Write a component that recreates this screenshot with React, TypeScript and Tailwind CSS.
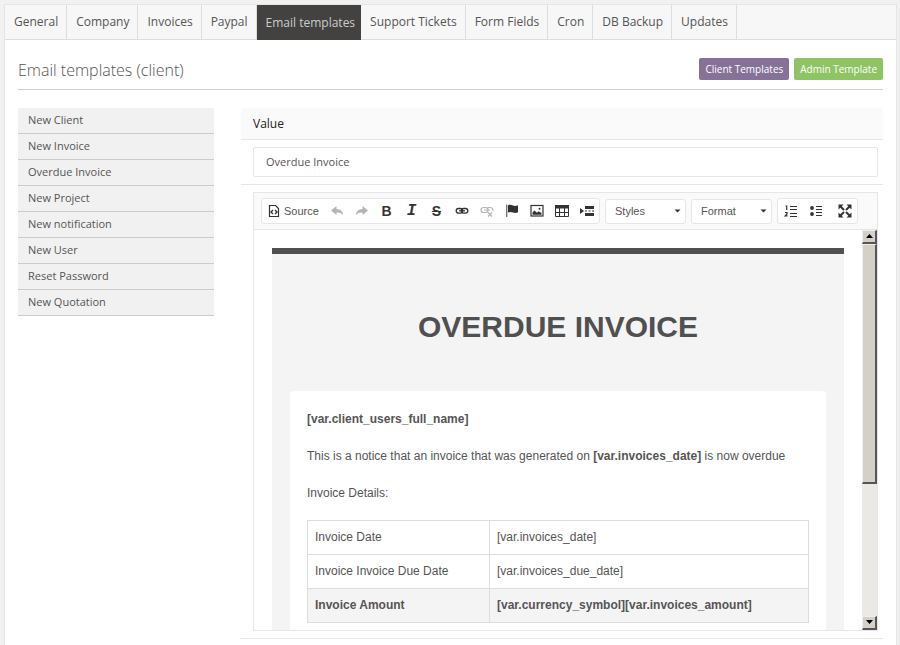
import React from 'react';

const tabs = [
  'General',
  'Company',
  'Invoices',
  'Paypal',
  'Email templates',
  'Support Tickets',
  'Form Fields',
  'Cron',
  'DB Backup',
  'Updates',
];

const templates = [
  'New Client',
  'New Invoice',
  'Overdue Invoice',
  'New Project',
  'New notification',
  'New User',
  'Reset Password',
  'New Quotation',
];

const rows = [
  { label: 'Invoice Date', value: '[var.invoices_date]', total: false },
  { label: 'Invoice Invoice Due Date', value: '[var.invoices_due_date]', total: false },
  { label: 'Invoice Amount', value: '[var.currency_symbol][var.invoices_amount]', total: true },
];

function Icon({ children, faded = false }: { children: React.ReactNode; faded?: boolean }) {
  return (
    <svg
      width="16"
      height="16"
      viewBox="0 0 16 16"
      fill="none"
      stroke="currentColor"
      aria-hidden="true"
      className={faded ? 'shrink-0 text-[#b5b5b5]' : 'shrink-0 text-[#333]'}
    >
      {children}
    </svg>
  );
}

function Tool({ label, children }: { label: string; children: React.ReactNode }) {
  return (
    <button
      type="button"
      aria-label={label}
      title={label}
      className="flex h-[23px] w-[25px] shrink-0 items-center justify-center text-[#333]"
    >
      {children}
    </button>
  );
}

function ToolSelect({ label, options }: { label: string; options: string[] }) {
  return (
    <div className="relative w-[81px] shrink-0">
      <select
        aria-label={label}
        defaultValue={label}
        className="h-[25px] w-full appearance-none rounded-[3px] border border-[#e6e6e6] bg-white pl-[9px] text-[11px] text-[#555]"
      >
        <option>{label}</option>
        {options.map((o) => (
          <option key={o}>{o}</option>
        ))}
      </select>
      <svg
        width="7"
        height="4"
        viewBox="0 0 7 4"
        aria-hidden="true"
        className="pointer-events-none absolute top-[11px] right-[5px]"
      >
        <path d="M0.5 0.5h6L3.5 3.5z" fill="#333" />
      </svg>
    </div>
  );
}

function Toolbar() {
  return (
    <div className="flex gap-[5px] border-b border-[#e6e6e6] bg-[#fafafa] px-[7px] py-[5px] font-['Liberation_Sans',sans-serif]">
      <div className="flex shrink-0 rounded-[3px] border border-[#e6e6e6] bg-white">
        <button
          type="button"
          className="flex h-[23px] w-[62px] items-center gap-[2px] pl-[4px] text-[11px] leading-[13px] text-[#555]"
        >
          <Icon>
            <path d="M3.500 2.500h6L12.500 5.500V13.500h-9z" strokeWidth="1.200" />
            <path d="M7 7L5 9l2 2M9 7l2 2-2 2" strokeWidth="1.400" />
          </Icon>
          <span className="pt-px">Source</span>
        </button>
        <Tool label="Undo">
          <Icon faded>
            <path d="M2 7.500L7.500 3v3c4 .2 6.300 2.500 6.500 6-1.500-2-3.500-2.700-6.500-2.600V12z" fill="currentColor" stroke="none" />
          </Icon>
        </Tool>
        <Tool label="Redo">
          <Icon faded>
            <path d="M14 7.500L8.500 3v3C4.500 6.200 2.200 8.500 2 12c1.500-2 3.500-2.700 6.500-2.600V12z" fill="currentColor" stroke="none" />
          </Icon>
        </Tool>
        <Tool label="Bold">
          <span className="text-sm font-bold">B</span>
        </Tool>
        <Tool label="Italic">
          <span className="font-['Liberation_Mono',monospace] text-base leading-[16px] font-bold italic">I</span>
        </Tool>
        <Tool label="Strikethrough">
          <span className="text-sm font-bold line-through">S</span>
        </Tool>
        <Tool label="Link">
          <Icon>
            <rect x="2.200" y="5.500" width="6.500" height="4.600" rx="2.300" strokeWidth="1.300" />
            <rect x="7.300" y="5.500" width="6.500" height="4.600" rx="2.300" strokeWidth="1.300" />
            <path d="M5 7.800h6" strokeWidth="1.200" />
          </Icon>
        </Tool>
        <Tool label="Unlink">
          <Icon faded>
            <rect x="2" y="4.500" width="7" height="5" rx="2.500" strokeWidth="1.200" />
            <path d="M8 5.500a2.500 2.500 0 0 1 1.500-1h2a2.500 2.500 0 0 1 2.200 3.500M5 7h6" strokeWidth="1.200" />
            <path d="M9 9.500l4 4M13 9.500l-4 4" strokeWidth="1.300" />
          </Icon>
        </Tool>
        <Tool label="Anchor">
          <Icon>
            <path d="M2.700 1.500V14" stroke="#777" strokeWidth="1.400" />
            <path d="M4 2.300c2-1 3.500-.4 5 .2s3 .6 5-.3v7c-2 1-3.500.8-5 .2s-3-.8-5 .1z" fill="currentColor" stroke="none" />
          </Icon>
        </Tool>
        <Tool label="Image">
          <Icon>
            <rect x="2" y="2.500" width="12" height="10.500" strokeWidth="1.200" />
            <path d="M3.500 11.800V9.500l2-2L8 9.800l1.500-1.500 3 1.800v1.700z" fill="currentColor" stroke="none" />
            <circle cx="10.500" cy="5.800" r="1" fill="currentColor" stroke="none" />
          </Icon>
        </Tool>
        <Tool label="Table">
          <Icon>
            <path d="M1 2h14v3.500H1z" fill="currentColor" stroke="none" />
            <path d="M1.500 5v8.500h13V5M1.500 9.500h13M5.500 5v8.500M10.500 5v8.500" />
          </Icon>
        </Tool>
        <Tool label="Page break">
          <Icon>
            <path d="M1 5l4 3-4 3z" fill="currentColor" stroke="none" />
            <path d="M6 3h9v3H6zM6 10h9v3H6z" fill="currentColor" stroke="none" />
            <path d="M6 8h9" strokeDasharray="2 1.500" />
          </Icon>
        </Tool>
      </div>

      <ToolSelect label="Styles" options={['Italic Title', 'Subtitle', 'Marker']} />
      <ToolSelect label="Format" options={['Normal', 'Heading 1', 'Heading 2']} />

      <div className="flex shrink-0 rounded-[3px] border border-[#e6e6e6] bg-white">
        <Tool label="Numbered list">
          <Icon>
            <path d="M7 3.500h7M7 6.500h7M7 10.500h7M7 13.500h7" strokeWidth="1.100" />
            <path d="M2.500 3h1.200v4M2 9.500h2v1.500l-1.800 1.900H4.500" strokeWidth="1.200" />
          </Icon>
        </Tool>
        <Tool label="Bulleted list">
          <Icon>
            <circle cx="4" cy="5" r="1.900" fill="currentColor" stroke="none" />
            <circle cx="4" cy="11" r="1.900" fill="currentColor" stroke="none" />
            <path d="M8 3.500h6M8 6.500h6M8 9.500h6M8 12.500h6" strokeWidth="1.100" />
          </Icon>
        </Tool>
        <div className="pl-[4px]">
          <Tool label="Maximize">
            <Icon>
              <path d="M1.500 1.500h5L1.500 6.500zM14.500 1.500v5L9.500 1.500zM1.500 14.500V9.500L6.500 14.500zM14.500 14.500H9.500L14.500 9.500z" fill="currentColor" stroke="none" />
              <path d="M3 3l4 4M13 3L9 7M3 13l4-4M13 13L9 9" strokeWidth="2" />
            </Icon>
          </Tool>
        </div>
      </div>
    </div>
  );
}

function ScrollButton({ label, path }: { label: string; path: string }) {
  return (
    <button
      type="button"
      aria-label={label}
      className="flex h-[14px] shrink-0 items-center justify-center border-t border-r-2 border-b-2 border-l border-t-[#eee] border-r-[#555] border-b-[#555] border-l-[#eee] bg-[#d4d0c8]"
    >
      <svg width="7" height="4" viewBox="0 0 7 4" aria-hidden="true">
        <path d={path} fill="#000" />
      </svg>
    </button>
  );
}

function EmailPreview() {
  return (
    <div className="flex h-[400px]">
      <div className="min-w-0 flex-1 overflow-hidden px-[18px] pt-[18px] font-['Liberation_Sans',Arial,sans-serif] text-xs text-[#555]">
        <div className="border-t-[6px] border-[#505050] bg-[#f4f4f4] px-[18px] pb-[18px]">
          <h2 className="pt-[58px] pb-[49px] text-center text-[30px] leading-[30px] font-bold text-[#505050]">
            OVERDUE INVOICE
          </h2>
          <div className="rounded-t-[4px] bg-white px-[17px] pt-[19px] pb-[40px] leading-[18px]">
            <p className="font-bold">[var.client_users_full_name]</p>
            <p className="mt-[19px]">
              This is a notice that an invoice that was generated on <b>[var.invoices_date]</b> is now
              overdue
            </p>
            <p className="mt-[19px]">Invoice Details:</p>
            <table className="mt-[18px] w-full border-collapse">
              <tbody>
                {rows.map((r) => (
                  <tr key={r.label} className={r.total ? 'bg-[#f4f4f4] font-bold' : ''}>
                    <td className="w-[182px] border border-[#ddd] px-[7px] py-[8px] leading-[17px]">
                      {r.label}
                    </td>
                    <td className="border border-[#ddd] px-[7px] py-[8px] leading-[17px]">{r.value}</td>
                  </tr>
                ))}
              </tbody>
            </table>
          </div>
        </div>
      </div>
      <div className="flex w-[15px] shrink-0 flex-col bg-[#ebe9e5]">
        <ScrollButton label="Scroll up" path="M3.500 0L7 4H0z" />
        <div className="h-[240px] border-t border-r-2 border-b-2 border-l border-t-[#eee] border-r-[#555] border-b-[#555] border-l-[#eee] bg-[#d4d0c8]" />
        <div className="flex-1" />
        <ScrollButton label="Scroll down" path="M0 0h7L3.500 4z" />
      </div>
    </div>
  );
}

export default function App() {
  return (
    <div className="flex min-h-screen flex-col bg-[#f1f1f1] pt-[4px] pr-[3px] pl-[4px] font-['Open_Sans',sans-serif] text-[#555]">
      <div className="flex-1 border-x border-t border-[#e5e5e5] bg-white">
        <nav className="flex h-[35px] border-b border-[#ddd] bg-[#f7f7f7]">
          {tabs.map((t) => (
            <a
              key={t}
              href="#"
              className={
                t === 'Email templates'
                  ? 'flex h-[35px] items-center bg-[#444240] pr-[6px] pl-[9px] text-xs text-[#ccc]'
                  : 'flex items-center border-r border-[#ddd] pr-[8px] pl-[9px] text-xs text-[#555]'
              }
            >
              {t}
            </a>
          ))}
        </nav>

        <div className="px-[13px]">
          <header className="flex h-[50px] items-center justify-between border-b border-[#ccc] pt-[9px]">
            <h1 className="pt-px text-base font-light text-[#555]">Email templates (client)</h1>
            <div className="flex gap-[5px]">
              <button type="button" className="h-[22px] rounded-[2px] bg-[#867199] px-[6px] text-[10px] text-white">
                Client Templates
              </button>
              <button type="button" className="h-[22px] rounded-[2px] bg-[#8fc464] px-[6px] text-[10px] text-white">
                Admin Template
              </button>
            </div>
          </header>

          <div className="mt-[18px] flex gap-[27px]">
            <ul className="w-[196px] shrink-0">
              {templates.map((t) => (
                <li key={t} className="border-b border-[#ccc] bg-[#f1f1f1]">
                  <a href="#" className="flex h-[25px] items-center px-[10px] text-[11px] text-[#555]">
                    {t}
                  </a>
                </li>
              ))}
            </ul>

            <main className="min-w-0 flex-1">
              <label
                htmlFor="subject"
                className="flex h-[32px] items-center border-b border-[#e6e6e6] bg-[#fafafa] px-[12px] text-xs text-[#222]"
              >
                Value
              </label>
              <div className="border-b border-[#e6e6e6] py-[7px] pr-[5px] pl-[12px]">
                <input
                  id="subject"
                  type="text"
                  defaultValue="Overdue Invoice"
                  className="block h-[30px] w-full rounded-[2px] border border-[#e6e6e6] bg-white px-[12px] pb-[2px] text-[11px] text-[#555]"
                />
              </div>
              <div className="border-b border-[#e6e6e6] py-[7px] pr-[5px] pl-[12px]">
                <div className="border border-[#e6e6e6]">
                  <Toolbar />
                  <EmailPreview />
                </div>
              </div>
            </main>
          </div>
        </div>
      </div>
    </div>
  );
}
